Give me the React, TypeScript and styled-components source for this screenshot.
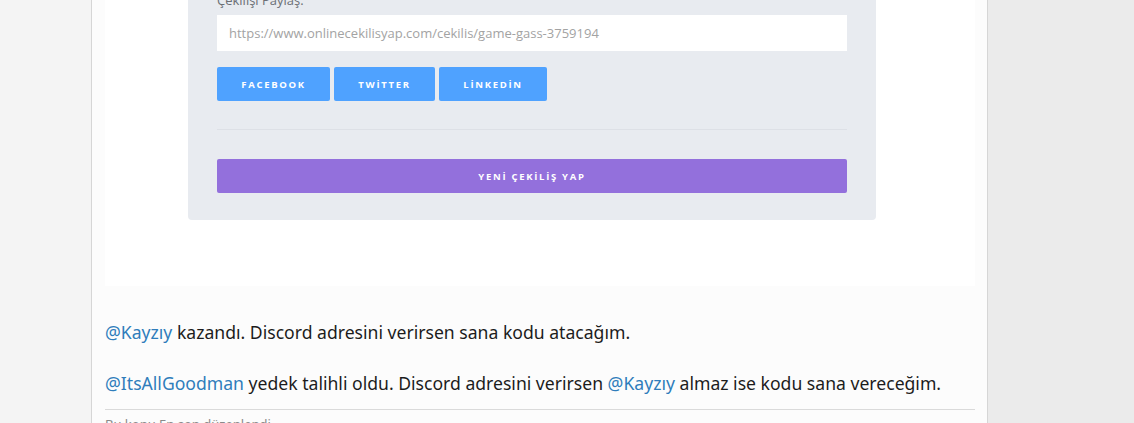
import React from "react";
import styled, { createGlobalStyle } from "styled-components";

const Global = createGlobalStyle`
  html, body { margin: 0; padding: 0; overflow: hidden; }
  body { background: #ebebeb; font-family: "Open Sans", "Noto Sans", sans-serif; }
`;

const Page = styled.div`
  display: grid;
  grid-template-columns: 91px 897px 1fr;
  height: 423px;
  overflow: hidden;
`;

const Gutter = styled.div<{ $bg: string }>`
  background: ${(p) => p.$bg};
`;

const Panel = styled.main`
  background: #fcfcfc;
  border-left: 1px solid #d6d6d6;
  border-right: 1px solid #d6d6d6;
  padding: 0 12px 0 13px;
  margin-top: -54px;
`;

const Shot = styled.div`
  background: #ffffff;
  padding: 20px 99px 66px 83px;
`;

const Card = styled.section`
  background: #e8ebf0;
  border-radius: 4px;
  padding: 25px 29px 27px;
`;

const Label = styled.div`
  font-size: 13px;
  line-height: 18px;
  color: #6b6f75;
  margin-bottom: 6px;
`;

const UrlInput = styled.div`
  height: 36px;
  background: #fff;
  display: flex;
  align-items: center;
  padding: 0 12px;
  font-size: 13px;
  color: #a3a3a3;
`;

const ShareRow = styled.div`
  display: flex;
  gap: 4px;
  margin-top: 16px;
`;

const Btn = styled.button<{ $w?: number; $bg: string }>`
  height: 34px;
  width: ${(p) => (p.$w ? `${p.$w}px` : "100%")};
  border: none;
  border-radius: 2px;
  background: ${(p) => p.$bg};
  color: #fff;
  font-family: "Open Sans", sans-serif;
  font-weight: 700;
  font-size: 9.5px;
  letter-spacing: 1.7px;
  text-transform: uppercase;
  padding: 0;
  display: flex;
  align-items: center;
  justify-content: center;
`;

const Divider = styled.hr`
  border: none;
  border-top: 1px solid #dde0e6;
  margin: 28px 0 29px;
`;

const Post = styled.div`
  padding-top: 34px;
  font-family: "Noto Sans", "Open Sans", sans-serif;
  font-size: 17.6px;
  line-height: 25.5px;
  color: #1c1c1c;
`;

const Para = styled.p`
  margin: 0 0 25.5px;
  &:last-child { margin-bottom: 0; }
`;

const Mention = styled.a`
  color: #2f7dbb;
  text-decoration: none;
`;

const Sep = styled.div`
  border-top: 1px solid #dadada;
  margin-top: 12px;
  padding-top: 5px;
  font-size: 13px;
  color: #8a8a8a;
  font-family: "Noto Sans", sans-serif;
`;

export default function App() {
  return (
    <>
      <Global />
      <Page>
        <Gutter $bg="#f4f4f4" />
        <Panel>
          <Shot>
            <Card>
              <Label>Çekilişi Paylaş:</Label>
              <UrlInput>https://www.onlinecekilisyap.com/cekilis/game-gass-3759194</UrlInput>
              <ShareRow>
                <Btn $w={113} $bg="#4fa2ff">FACEBOOK</Btn>
                <Btn $w={101} $bg="#4fa2ff">TWİTTER</Btn>
                <Btn $w={108} $bg="#4fa2ff">LİNKEDİN</Btn>
              </ShareRow>
              <Divider />
              <Btn $bg="#9370dc">YENİ ÇEKİLİŞ YAP</Btn>
            </Card>
          </Shot>
          <Post>
            <Para>
              <Mention href="#">@Kayzıy</Mention> kazandı. Discord adresini verirsen sana kodu atacağım.
            </Para>
            <Para>
              <Mention href="#">@ItsAllGoodman</Mention> yedek talihli oldu. Discord adresini verirsen{" "}
              <Mention href="#">@Kayzıy</Mention> almaz ise kodu sana vereceğim.
            </Para>
          </Post>
          <Sep>Bu konu En son düzenlendi</Sep>
        </Panel>
        <Gutter $bg="#ebebeb" />
      </Page>
    </>
  );
}
